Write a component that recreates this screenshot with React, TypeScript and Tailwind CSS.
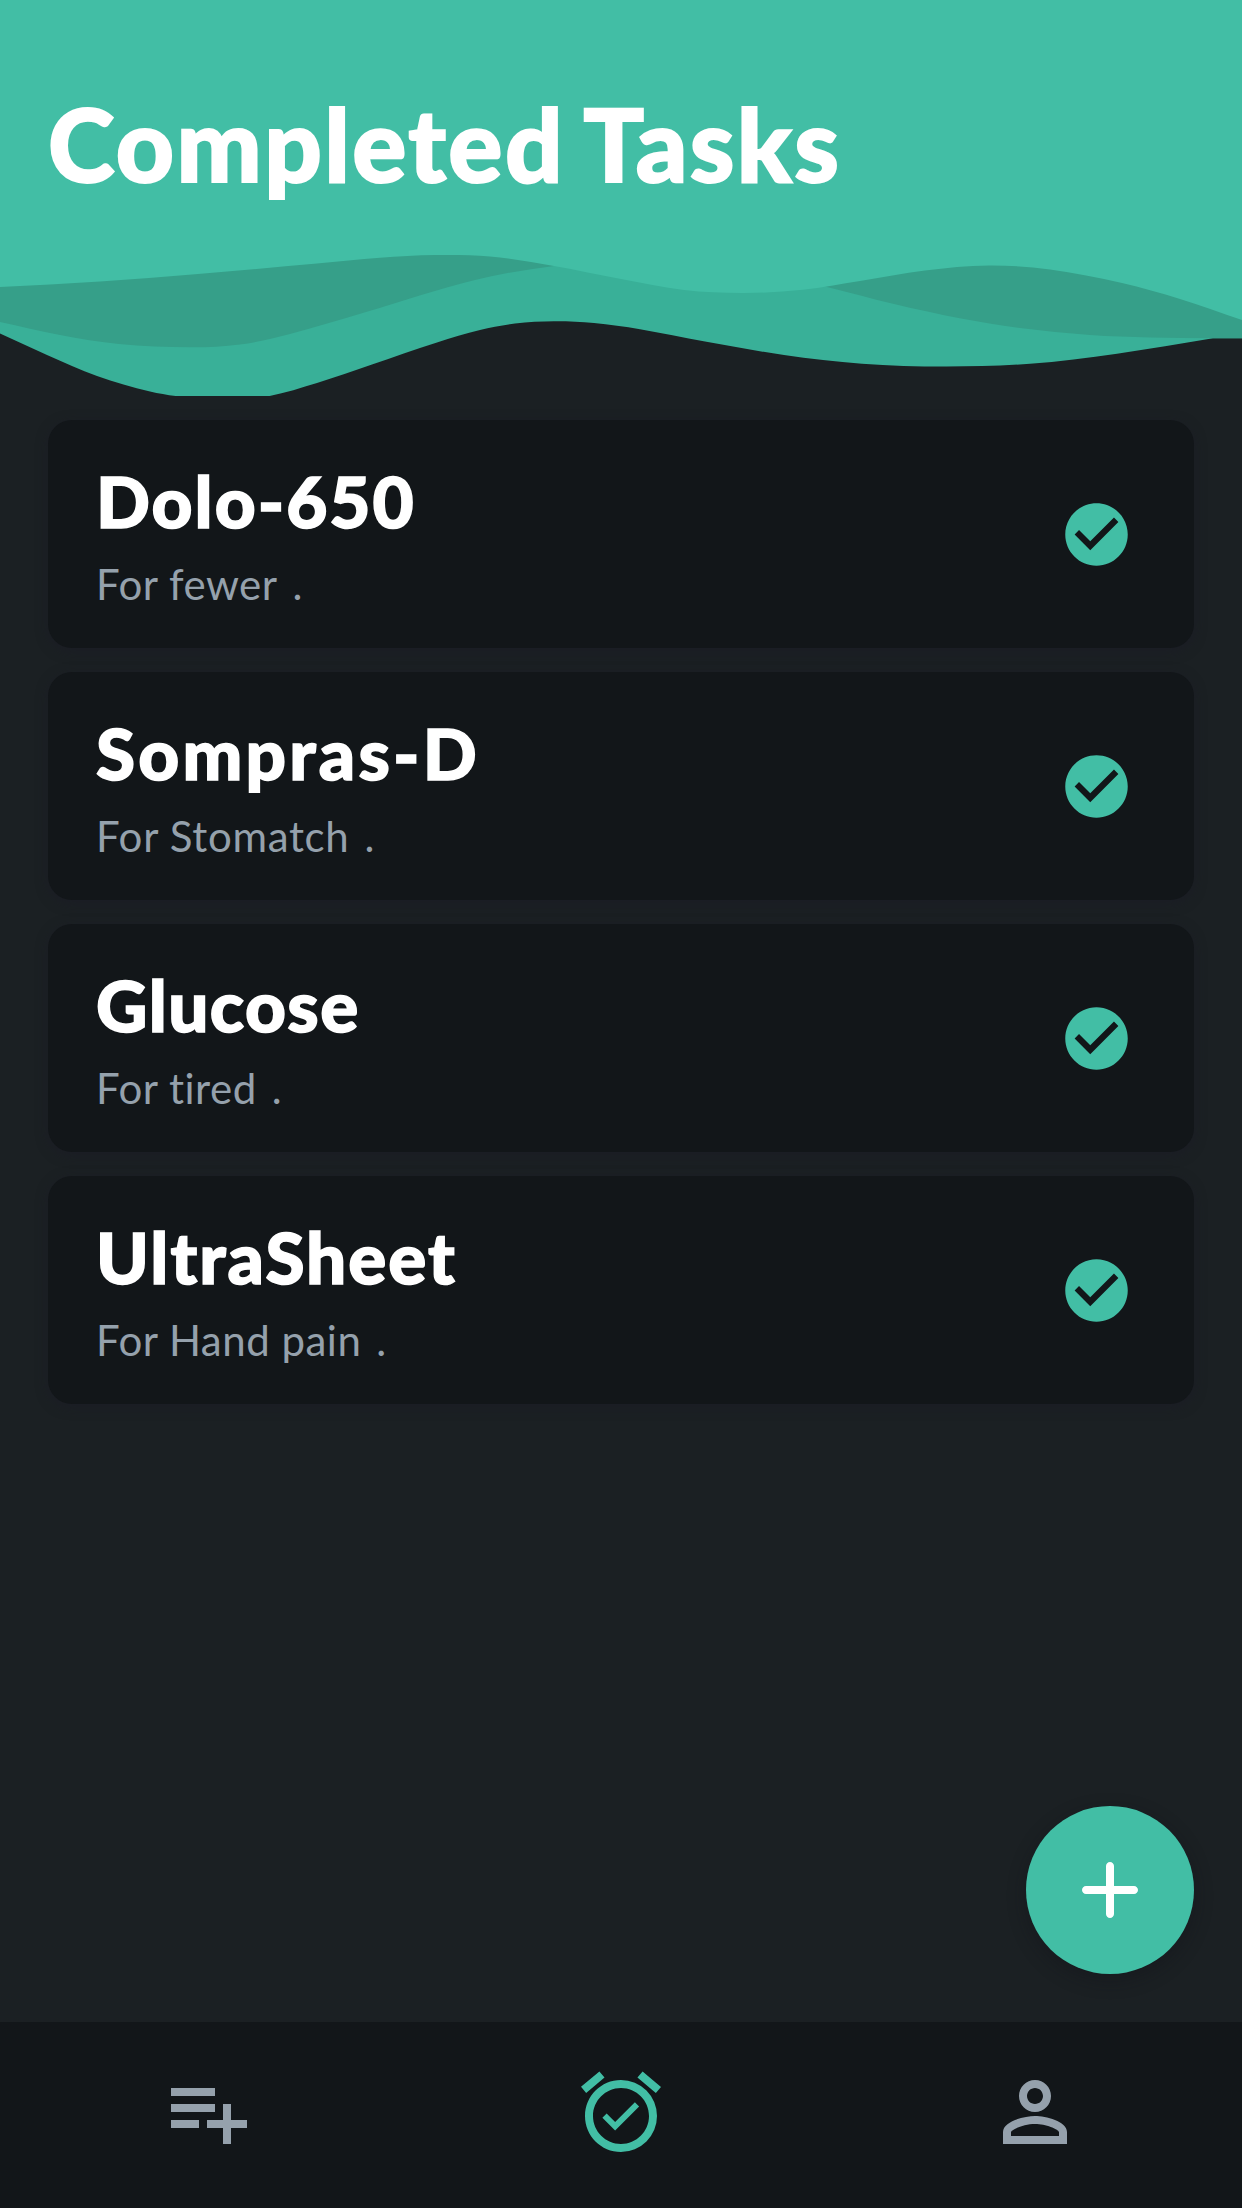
import type { ReactNode } from "react";

type Point = [number, number];

// Smooth curve through the points (Catmull-Rom converted to cubic segments).
function curve(points: Point[]): string {
  let d = "";
  for (let i = 0; i < points.length - 1; i++) {
    const p0 = points[Math.max(i - 1, 0)];
    const p1 = points[i];
    const p2 = points[i + 1];
    const p3 = points[Math.min(i + 2, points.length - 1)];
    const t = (p2[0] - p1[0]) / 3;
    const s1 = p2[0] === p0[0] ? 0 : (p2[1] - p0[1]) / (p2[0] - p0[0]);
    const s2 = p3[0] === p1[0] ? 0 : (p3[1] - p1[1]) / (p3[0] - p1[0]);
    d += ` C ${p1[0] + t} ${p1[1] + s1 * t}, ${p2[0] - t} ${p2[1] - s2 * t}, ${p2[0]} ${p2[1]}`;
  }
  return d;
}

const crest: Point[] = [
  [0, 287], [100, 281.5], [198, 274], [317, 263.5], [380, 257.8], [435, 255],
  [490, 256.5], [554, 266], [621, 279], [684, 290], [744, 293], [803, 289.7],
  [860, 281], [925, 270.5], [989, 265.5], [1050, 269.5], [1122, 283], [1180, 299], [1242, 320],
];

const swell: Point[] = [
  [0, 322], [60, 335], [119, 344], [190, 347.3], [240, 344.5], [290, 334],
  [366, 312], [475, 280], [554, 266], [621, 262], [700, 265], [760, 272], [827, 287],
  [894, 304], [961, 318.5], [1020, 328], [1090, 335], [1150, 337.5], [1213, 338.3],
];

const shore: Point[] = [
  [0, 333.5], [47, 355], [97, 376], [150, 391.5], [184, 397], [224, 400], [267, 396.5],
  [317, 383], [372, 364.5], [437, 342.5], [480, 330], [515, 323.5], [554, 321.3],
  [594, 323], [640, 329.2], [705, 341.5], [784, 355], [862, 363.7], [945, 366.5],
  [1030, 363.8], [1117, 353.7], [1213, 338.3],
];

function Waves() {
  return (
    <svg className="block h-full w-full" viewBox="0 0 1242 396" preserveAspectRatio="none">
      <path d={`M0 0H1242V338.3H1213${curve([...shore].reverse())} Z`} fill="#39b098" />
      <path d={`M0 0H1242V338.3H1213${curve([...swell].reverse())} Z`} fill="#369f89" />
      <path d={`M0 0V287${curve(crest)} V0Z`} fill="#42bea5" />
    </svg>
  );
}

function Icon({ className, children }: { className: string; children: ReactNode }) {
  return (
    <svg className={className} viewBox="0 0 24 24" fill="currentColor">
      {children}
    </svg>
  );
}

const tasks = [
  { name: "Dolo-650", note: "For fewer", nameClass: "tracking-[2px]", noteClass: "tracking-[0.5px]" },
  { name: "Sompras-D", note: "For Stomatch", nameClass: "tracking-[3.2px]", noteClass: "tracking-[0.7px]" },
  { name: "Glucose", note: "For tired", nameClass: "tracking-[1.4px]", noteClass: "tracking-[0.5px]" },
  { name: "UltraSheet", note: "For Hand pain", nameClass: "tracking-[2px]", noteClass: "tracking-[0.5px]" },
];

export default function App() {
  return (
    <div className="relative flex h-[2208px] w-[1242px] flex-col overflow-hidden bg-[#1b2023] font-['Lato',sans-serif]">
      <header className="relative h-[396px] shrink-0">
        <Waves />
        <h1 className="absolute top-[79px] left-12 text-[101px] leading-[128px] font-black tracking-[2.4px] whitespace-nowrap text-white [-webkit-text-stroke:2px_white] [word-spacing:-5px]">
          Completed Tasks
        </h1>
      </header>

      <main className="flex flex-1 flex-col gap-6 px-12 pt-6">
        {tasks.map((task) => (
          <article
            key={task.name}
            className="flex h-[228px] items-center justify-between rounded-[24px] bg-[#121619] pr-[60px] pl-12 shadow-[0_3px_12px_rgba(26,27,38,0.6)]"
          >
            <div className="-mt-px">
              <h2 className={`text-[71px] leading-[90px] font-black text-white [-webkit-text-stroke:1.5px_white] ${task.nameClass}`}>
                {task.name}
              </h2>
              <p className="mt-3 flex text-[42px] leading-[53px] text-[#95a1ac]">
                <span className={task.noteClass}>{task.note}</span>
                <span className="ml-[15px]">.</span>
              </p>
            </div>
            <Icon className="size-[75px] text-[#42bea5]">
              <path d="M12 2C6.48 2 2 6.48 2 12s4.48 10 10 10 10-4.48 10-10S17.52 2 12 2zm-2 15-5-5 1.41-1.41L10 14.17l7.59-7.59L19 8l-9 9z" />
            </Icon>
          </article>
        ))}
      </main>

      <button className="absolute right-12 bottom-[234px] flex size-[168px] items-center justify-center rounded-full bg-[#42bea5] text-white shadow-[0_6px_18px_rgba(18,18,24,0.4)]">
        <Icon className="size-24">
          <path d="M18 13h-5v5c0 .55-.45 1-1 1s-1-.45-1-1v-5H6c-.55 0-1-.45-1-1s.45-1 1-1h5V6c0-.55.45-1 1-1s1 .45 1 1v5h5c.55 0 1 .45 1 1s-.45 1-1 1z" />
        </Icon>
      </button>

      <nav className="grid h-[186px] shrink-0 grid-cols-[414px_414px_414px] bg-[#121619] pt-[42px] text-[#95a1ac]">
        <div className="flex justify-center">
          <Icon className="size-24">
            <path d="M14 10H3v2h11v-2zm0-4H3v2h11V6zm4 8v-4h-2v4h-4v2h4v4h2v-4h4v-2h-4zM3 16h7v-2H3v2z" />
          </Icon>
        </div>
        <div className="flex justify-center text-[#42bea5]">
          <Icon className="size-24">
            <path d="M22 5.72l-4.6-3.86-1.29 1.53 4.6 3.86L22 5.72zM7.88 3.39L6.6 1.86 2 5.71l1.29 1.53 4.59-3.85zM12 4c-4.97 0-9 4.03-9 9s4.02 9 9 9a9 9 0 1 0 0-18zm0 16c-3.87 0-7-3.13-7-7s3.13-7 7-7 7 3.13 7 7-3.13 7-7 7zm-1.46-5.47L8.41 12.4l-1.06 1.06 3.18 3.18 6-6-1.06-1.06-4.93 4.95z" />
          </Icon>
        </div>
        <div className="flex justify-center">
          <Icon className="size-24">
            <path d="M12 6c1.1 0 2 .9 2 2s-.9 2-2 2-2-.9-2-2 .9-2 2-2m0-2C9.79 4 8 5.79 8 8s1.79 4 4 4 4-1.79 4-4-1.79-4-4-4zm0 9c-2.67 0-8 1.34-8 4v3h16v-3c0-2.66-5.33-4-8-4zm6 5H6v-.99c.2-.72 3.3-2.01 6-2.01s5.8 1.29 6 2v1z" />
          </Icon>
        </div>
      </nav>
    </div>
  );
}
